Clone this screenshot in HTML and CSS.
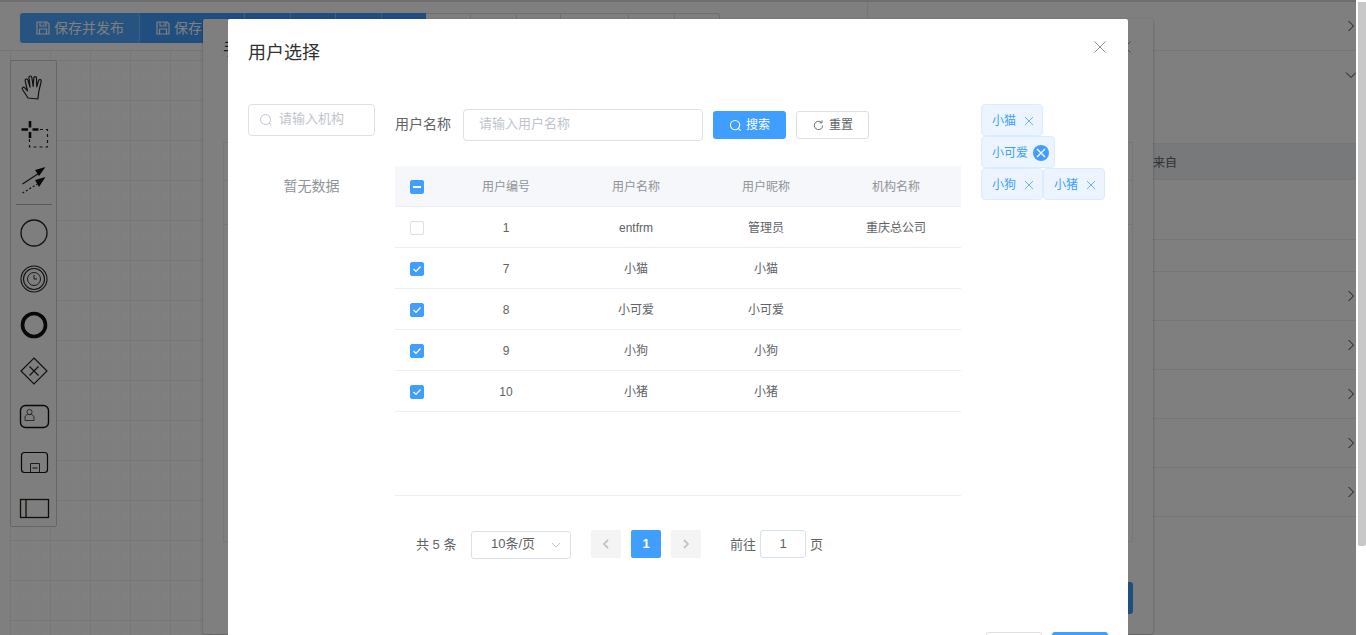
FILE: index.html
```html
<!DOCTYPE html>
<html lang="zh">
<head>
<meta charset="utf-8">
<title>用户选择</title>
<link rel="stylesheet" href="styles.css">
</head>
<body>
<div class="page">
  <div class="topstrip"></div>
  <div class="layout">
    <div class="left">
      <div class="toolbar">
        <div class="tb-group">
          <span class="tb-btn tb-wide">
            <svg class="tb-icon" viewBox="0 0 14 14"><path d="M1 1h10l2 2v10H1zM4 1v4h6V1M3.500 13V8h7v5M8 2.300v1.500" fill="none" stroke="currentColor" stroke-width="1.200"/></svg>保存并发布</span>
          <span class="tb-btn tb-save">
            <svg class="tb-icon" viewBox="0 0 14 14"><path d="M1 1h10l2 2v10H1zM4 1v4h6V1M3.500 13V8h7v5M8 2.300v1.500" fill="none" stroke="currentColor" stroke-width="1.200"/></svg>保存</span>
          <span class="tb-btn tb-s1"></span><span class="tb-btn tb-s2"></span><span class="tb-btn tb-s3"></span><span class="tb-btn tb-s4"></span>
        </div>
        <div class="tb-outline">
          <span class="tb-o o1"></span><span class="tb-o o2"></span><span class="tb-o o3"></span><span class="tb-o o4"></span><span class="tb-o o5"></span><span class="tb-o o6"></span>
        </div>
      </div>
      <div class="canvas">
        <div class="palette">
          <svg class="pal-icon" viewBox="0 0 46 46"><path d="M17 34l-5.500-8.500c-1-1.800 1-3 2.300-1.700l2.700 3-2.300-10c-.4-2 2-2.500 2.700-.7l2.100 7-1-9.500c-.2-2 2.500-2.200 2.800-.3l1.400 9 .6-8.300c.2-1.900 2.600-1.800 2.700.1l.2 8.700 2-6.300c.6-1.700 2.900-1 2.500.8l-2.300 9.700-1 8z" fill="none" stroke="#222" stroke-width="1.200" stroke-linejoin="round"/></svg>
          <svg class="pal-icon" viewBox="0 0 46 46"><path d="M10.500 19.500h6.500M21.500 19.500h6M19 11v6.500M19 22v6" stroke="#111" stroke-width="2.600" fill="none"/><path d="M29 19.500h7.500V37h-18v-8" stroke="#222" stroke-width="1.200" stroke-dasharray="3 3" fill="none"/></svg>
          <svg class="pal-icon" viewBox="0 0 46 46"><path d="M11.500 28l16-10.500" stroke="#222" stroke-width="1.200"/><path d="M34.500 11l-10.500 3 4 6z" fill="#111"/><path d="M11.500 37l15-9" stroke="#222" stroke-width="1.200" stroke-dasharray="2 2"/><path d="M34.500 21l-10.500 3 4 7z" fill="#111"/></svg>
          <div class="pal-sep"></div>
          <svg class="pal-icon" viewBox="0 0 46 46"><circle cx="23" cy="23" r="13" fill="none" stroke="#222" stroke-width="1.300"/></svg>
          <svg class="pal-icon" viewBox="0 0 46 46"><circle cx="23" cy="23" r="13" fill="none" stroke="#222" stroke-width="1.100"/><circle cx="23" cy="23" r="10.500" fill="none" stroke="#222" stroke-width="1.100"/><circle cx="23" cy="23" r="6.500" fill="none" stroke="#333" stroke-width="1"/><path d="M23 19v4h3" fill="none" stroke="#333"/></svg>
          <svg class="pal-icon" viewBox="0 0 46 46"><circle cx="23" cy="23" r="11.500" fill="none" stroke="#111" stroke-width="3.600"/></svg>
          <svg class="pal-icon" viewBox="0 0 46 46"><path d="M23 10l13 13-13 13-13-13z" fill="none" stroke="#222" stroke-width="1.200"/><path d="M18.500 18.500l9 9M27.500 18.500l-9 9" stroke="#222" stroke-width="1.200"/></svg>
          <svg class="pal-icon" viewBox="0 0 46 46"><rect x="9.500" y="11.500" width="28" height="22" rx="5" fill="none" stroke="#111" stroke-width="1.400"/><circle cx="18.500" cy="18" r="2.600" fill="none" stroke="#445" stroke-width=".9"/><path d="M14 26.500V23c0-1.500 2-2 2.500-2.500h4c.5.500 2.500 1 2.500 2.500v3.500z" fill="none" stroke="#445" stroke-width=".9"/></svg>
          <svg class="pal-icon" viewBox="0 0 46 46"><rect x="10.500" y="12.500" width="26" height="20" rx="3" fill="none" stroke="#111" stroke-width="1.200"/><path d="M19.500 32.500v-9h9v9" fill="none" stroke="#433" stroke-width="1"/><path d="M21.500 28h5" stroke="#222"/></svg>
          <svg class="pal-icon" viewBox="0 0 46 46"><rect x="9.500" y="13.500" width="28" height="18" fill="none" stroke="#221a10" stroke-width="1.300"/><path d="M15 14v17" stroke="#221a10" stroke-width="1.300"/></svg>
        </div>
      </div>
    </div>
    <div class="panel">
      <div class="fold"><svg class="chev" viewBox="0 0 10 12"><path d="M2.500 1l5 5-5 5" fill="none" stroke="#303133" stroke-width="1"/></svg></div>
      <div class="fold fold-open"><svg class="chev" viewBox="0 0 12 10"><path d="M1 2.500l5 5 5-5" fill="none" stroke="#303133" stroke-width="1"/></svg></div>
      <div class="form-area">
        <div class="ptable-head"><span>来自</span></div>
        <div class="ptable-row"></div>
        <div class="ptable-row2"></div>
      </div>
      <div class="fold"><svg class="chev" viewBox="0 0 10 12"><path d="M2.500 1l5 5-5 5" fill="none" stroke="#303133" stroke-width="1"/></svg></div>
      <div class="fold"><svg class="chev" viewBox="0 0 10 12"><path d="M2.500 1l5 5-5 5" fill="none" stroke="#303133" stroke-width="1"/></svg></div>
      <div class="fold"><svg class="chev" viewBox="0 0 10 12"><path d="M2.500 1l5 5-5 5" fill="none" stroke="#303133" stroke-width="1"/></svg></div>
      <div class="fold"><svg class="chev" viewBox="0 0 10 12"><path d="M2.500 1l5 5-5 5" fill="none" stroke="#303133" stroke-width="1"/></svg></div>
      <div class="fold"><svg class="chev" viewBox="0 0 10 12"><path d="M2.500 1l5 5-5 5" fill="none" stroke="#303133" stroke-width="1"/></svg></div>
    </div>
  </div>
</div>

<div class="mid-dialog">
  <div class="mid-title">手</div>
  <svg class="mid-close" viewBox="0 0 12 12"><path d="M.5.500l11 11M11.500.500l-11 11" stroke="#909399" stroke-width="1"/></svg>
  <div class="mid-box">
    <div class="mid-line1"></div>
    <div class="mid-line2"></div>
  </div>
  <div class="mid-foot"><span class="mid-btn"></span></div>
</div>

<div class="overlay"></div>

<div class="modal">
  <div class="modal-head">
    <span class="modal-title">用户选择</span>
    <svg class="modal-close" viewBox="0 0 12 12"><path d="M.5.500l11 11M11.500.500l-11 11" stroke="#909399" stroke-width="1"/></svg>
  </div>
  <div class="modal-body">
    <div class="tree">
      <div class="input tree-input">
        <svg class="i-search" viewBox="0 0 14 14"><circle cx="6.500" cy="6.500" r="5" fill="none" stroke="#c0c4cc" stroke-width="1"/><path d="M10 10l2.500 2.500" stroke="#c0c4cc"/></svg>
        <span class="ph">请输入机构</span>
      </div>
      <div class="empty">暂无数据</div>
    </div>
    <div class="content">
      <div class="query">
        <span class="q-label">用户名称</span>
        <div class="input q-input"><span class="ph">请输入用户名称</span></div>
        <span class="btn btn-primary">
          <svg class="btn-icon" viewBox="0 0 14 14"><circle cx="6.500" cy="6.500" r="5" fill="none" stroke="#fff" stroke-width="1.100"/><path d="M10 10l2.500 2.500" stroke="#fff" stroke-width="1.100"/></svg>搜索</span>
        <span class="btn btn-plain">
          <svg class="btn-icon" viewBox="0 0 14 14"><path d="M11.500 7a4.500 4.500 0 1 1-1.500-3.400" fill="none" stroke="#606266" stroke-width="1"/><path d="M10.800 1.500v2.600H8.200" fill="none" stroke="#606266" stroke-width="1"/></svg>重置</span>
      </div>
      <div class="table-wrap">
        <table class="table">
          <colgroup><col class="c-sel"><col class="c-col"><col class="c-col"><col class="c-col"><col class="c-col"></colgroup>
          <thead>
            <tr><th><span class="cb cb-on"><span class="cb-dash"></span></span></th><th>用户编号</th><th>用户名称</th><th>用户昵称</th><th>机构名称</th></tr>
          </thead>
          <tbody>
            <tr><td><span class="cb"></span></td><td>1</td><td>entfrm</td><td>管理员</td><td>重庆总公司</td></tr>
            <tr><td><span class="cb cb-on"><svg viewBox="0 0 14 14"><path d="M3.500 7l2.500 2.500 4.500-5" fill="none" stroke="#fff" stroke-width="1.200"/></svg></span></td><td>7</td><td>小猫</td><td>小猫</td><td></td></tr>
            <tr><td><span class="cb cb-on"><svg viewBox="0 0 14 14"><path d="M3.500 7l2.500 2.500 4.500-5" fill="none" stroke="#fff" stroke-width="1.200"/></svg></span></td><td>8</td><td>小可爱</td><td>小可爱</td><td></td></tr>
            <tr><td><span class="cb cb-on"><svg viewBox="0 0 14 14"><path d="M3.500 7l2.500 2.500 4.500-5" fill="none" stroke="#fff" stroke-width="1.200"/></svg></span></td><td>9</td><td>小狗</td><td>小狗</td><td></td></tr>
            <tr><td><span class="cb cb-on"><svg viewBox="0 0 14 14"><path d="M3.500 7l2.500 2.500 4.500-5" fill="none" stroke="#fff" stroke-width="1.200"/></svg></span></td><td>10</td><td>小猪</td><td>小猪</td><td></td></tr>
          </tbody>
        </table>
      </div>
      <div class="pager">
        <span class="p-total">共 5 条</span>
        <div class="p-select"><span class="p-select-text">10条/页</span><svg class="p-caret" viewBox="0 0 10 6"><path d="M1 1l4 4 4-4" fill="none" stroke="#c0c4cc"/></svg></div>
        <span class="p-btn p-prev"><svg viewBox="0 0 8 12"><path d="M6 2L2 6l4 4" fill="none" stroke="#c0c4cc" stroke-width="1.800"/></svg></span>
        <span class="p-btn p-cur">1</span>
        <span class="p-btn"><svg viewBox="0 0 8 12"><path d="M2 2l4 4-4 4" fill="none" stroke="#c0c4cc" stroke-width="1.800"/></svg></span>
        <span class="p-goto">前往</span>
        <span class="p-input">1</span>
        <span class="p-page">页</span>
      </div>
    </div>
    <div class="tags">
      <span class="tag">小猫<svg class="tag-x" viewBox="0 0 16 16"><path d="M4 4l8 8M12 4l-8 8" stroke="#66b1ff" stroke-width="1"/></svg></span>
      <span class="tag">小可爱<svg class="tag-x tag-x-on" viewBox="0 0 16 16"><path d="M4 4l8 8M12 4l-8 8" stroke="#fff" stroke-width="1.300"/></svg></span>
      <span class="tag">小狗<svg class="tag-x" viewBox="0 0 16 16"><path d="M4 4l8 8M12 4l-8 8" stroke="#66b1ff" stroke-width="1"/></svg></span>
      <span class="tag">小猪<svg class="tag-x" viewBox="0 0 16 16"><path d="M4 4l8 8M12 4l-8 8" stroke="#66b1ff" stroke-width="1"/></svg></span>
    </div>
  </div>
  <div class="modal-foot">
    <span class="foot-btn foot-cancel"></span>
    <span class="foot-btn foot-ok"></span>
  </div>
</div>

<div class="scrollbar"><div class="thumb"></div></div>
</body>
</html>
```

FILE: styles.css
```css
* { box-sizing: border-box; }
html, body { margin: 0; height: 635px; overflow: hidden; }
body {
  position: relative;
  width: 1366px;
  background: #fff;
  font-family: "Liberation Sans", "Noto Sans CJK SC", sans-serif;
  font-size: 14px;
  color: #606266;
}
.page { display: flex; flex-direction: column; height: 635px; }
.topstrip { height: 2px; background: #dcdcdc; flex: none; }
.layout { flex: 1; display: flex; min-height: 0; }
.left { flex: none; width: 867px; display: flex; flex-direction: column; }
.toolbar {
  flex: none;
  height: 49px;
  padding: 11px 0 0 20px;
  display: flex;
  align-items: flex-start;
  border-bottom: 1px solid #e8e8e8;
}
.tb-group { display: flex; height: 30px; border-radius: 3px 0 0 3px; overflow: hidden; background: #4da6ff; }
.tb-btn {
  display: flex;
  align-items: center;
  height: 30px;
  color: #fff;
  font-size: 14px;
  line-height: 30px;
  border-right: 1px solid #7fbfff;
}
.tb-btn:last-child { border-right: 0; }
.tb-wide { width: 120px; padding-left: 16px; }
.tb-save { width: 105px; padding-left: 16px; background: #409eff; }
.tb-s1 { width: 46px; background: #409eff; }
.tb-s2 { width: 45px; background: #409eff; }
.tb-s3 { width: 46px; background: #409eff; }
.tb-s4 { width: 44px; background: #409eff; }
.tb-icon { width: 14px; height: 14px; margin-right: 4px; flex: none; }
.tb-outline { display: flex; height: 30px; border: 1px solid #dcdfe6; border-left: 0; border-radius: 0 3px 3px 0; }
.tb-o { height: 28px; border-right: 1px solid #dcdfe6; }
.tb-o:last-child { border-right: 0; }
.o1 { width: 45px; }
.o2 { width: 46px; }
.o3 { width: 44px; }
.o4 { width: 68px; }
.o5 { width: 46px; }
.o6 { width: 44px; }

.canvas {
  position: relative;
  flex: 1;
  margin-left: 10px;
  background-color: #fff;
  background-image:
    linear-gradient(to right, #eeeeee 1px, transparent 1px),
    linear-gradient(to bottom, #eeeeee 1px, transparent 1px),
    linear-gradient(to right, #fafafa 1px, transparent 1px),
    linear-gradient(to bottom, #fafafa 1px, transparent 1px);
  background-size: 40px 40px, 40px 40px, 10px 10px, 10px 10px;
  background-position: 0 9px, 0 9px, 0 9px, 0 9px;
}
.palette {
  position: absolute;
  left: 0;
  top: 9px;
  width: 47px;
  height: 467px;
  padding-top: 3px;
  background: #fdfdfd;
  border: 1px solid #ccc;
  border-radius: 2px;
  display: flex;
  flex-direction: column;
  align-items: center;
}
.pal-icon { width: 46px; height: 46px; flex: none; }
.pal-sep { flex: none; width: 36px; height: 1px; margin: 2px 0 5px; background: #b4b4b4; }

.panel { flex: 1; border-left: 1px solid #e6ebf5; padding-right: 10px; }
.fold {
  height: 49px;
  display: flex;
  align-items: center;
  justify-content: flex-end;
  border-bottom: 1px solid #e6ebf5;
}
.fold-open { border-bottom: 0; height: 48px; }
.chev { width: 12px; height: 12px; margin-right: -1px; }
.form-area { height: 173px; padding-top: 44px; border-bottom: 1px solid #e6ebf5; }
.ptable-head {
  height: 37px;
  padding-left: 285px;
  background: #f0f2f5;
  border-top: 1px solid #e6ebf5;
  border-bottom: 1px solid #e6ebf5;
  font-size: 12px;
  line-height: 38px;
  color: #606266;
}
.ptable-row { height: 60px; border-bottom: 1px solid #e6ebf5; }
.ptable-row2 { height: 31px; }

.mid-dialog {
  position: absolute;
  left: 203px;
  top: 19px;
  width: 950px;
  height: 615px;
  padding: 20px;
  background: #fff;
  border-radius: 2px;
  box-shadow: 0 1px 3px rgba(0, 0, 0, .3);
  display: flex;
  flex-direction: column;
}
.mid-title { height: 24px; font-size: 18px; line-height: 18px; color: #303133; padding-top: 1px; margin-top: 1px; flex: none; }
.mid-close { position: absolute; right: 22px; top: 22px; width: 12px; height: 12px; }
.mid-box { flex: none; height: 400px; margin-top: 78px; border: 1px solid #ebeef5; }
.mid-line1 { height: 38px; border-bottom: 1px solid #ebeef5; }
.mid-line2 { height: 44px; border-bottom: 1px solid #ebeef5; }
.mid-foot { display: flex; justify-content: flex-end; margin-top: 40px; }
.mid-btn { width: 70px; height: 32px; border-radius: 3px; background: #409eff; }

.overlay { position: absolute; inset: 0; background: rgba(0, 0, 0, .5); }

.modal {
  position: absolute;
  left: 228px;
  top: 19px;
  width: 900px;
  height: 616px;
  overflow: hidden;
  background: #fff;
  border-radius: 2px 2px 0 0;
}
.modal-head { position: relative; height: 55px; padding: 22px 20px 0; }
.modal-title { display: block; font-size: 18px; line-height: 24px; color: #303133; }
.modal-close { position: absolute; right: 22px; top: 22px; width: 12px; height: 12px; }
.modal-body { display: flex; gap: 20px; padding: 30px 20px 0; }

.input { display: flex; align-items: center; background: #fff; border: 1px solid #dcdfe6; border-radius: 4px; }
.ph { color: #c0c4cc; font-size: 13px; line-height: 20px; padding-bottom: 2px; }
.tree { width: 127px; flex: none; }
.tree-input { height: 32px; padding-left: 10px; }
.i-search { width: 14px; height: 14px; margin-right: 6px; }
.empty { margin-top: 40px; text-align: center; font-size: 14px; line-height: 20px; color: #909399; }

.content { width: 566px; flex: none; }
.query { display: flex; align-items: center; height: 32px; margin-top: 5px; }
.q-label { width: 68px; flex: none; font-size: 14px; line-height: 20px; padding-bottom: 2px; color: #606266; }
.q-input { width: 240px; height: 32px; padding-left: 15px; flex: none; }
.btn {
  display: flex;
  align-items: center;
  justify-content: center;
  width: 73px;
  height: 28px;
  margin-left: 10px;
  border-radius: 3px;
  font-size: 12px;
  line-height: 16px;
  flex: none;
}
.btn-primary { background: #409eff; color: #fff; }
.btn-plain { background: #fff; border: 1px solid #dcdfe6; color: #606266; }
.btn-icon { width: 13px; height: 13px; margin-right: 4px; }

.table-wrap { height: 330px; margin-top: 25px; border-bottom: 1px solid #ebeef5; }
.table { width: 566px; border-collapse: separate; border-spacing: 0; table-layout: fixed; font-size: 12px; }
.c-sel { width: 46px; }
.c-col { width: 130px; }
.table th, .table td {
  height: 41px;
  padding: 2px 0 0;
  text-align: center;
  font-weight: 400;
  line-height: 16px;
  border-bottom: 1px solid #ebeef5;
}
.table th { background: #f5f7fa; color: #909399; }
.table td { color: #606266; }
.cb {
  display: block;
  width: 14px;
  height: 14px;
  margin-left: 15px;
  border: 1px solid #dcdfe6;
  border-radius: 2px;
  background: #fff;
}
.cb svg { display: block; width: 14px; height: 14px; margin: -1px; }
.cb-on { background: #409eff; border-color: #409eff; }
.cb-dash { display: block; width: 8px; height: 2px; margin: 5px 2px 0; background: #fff; }

.pager { display: flex; align-items: center; height: 28px; margin-top: 34px; font-size: 13px; line-height: 18px; color: #606266; }
.p-total { width: 76px; padding: 2px 0 0 21px; flex: none; white-space: nowrap; }
.p-select {
  display: flex;
  align-items: center;
  justify-content: space-between;
  width: 100px;
  height: 28px;
  margin-top: 2px;
  padding: 0 9px 0 19px;
  border: 1px solid #dcdfe6;
  border-radius: 3px;
  flex: none;
}
.p-select-text { padding-bottom: 2px; }
.p-caret { width: 10px; height: 6px; }
.p-btn {
  display: flex;
  align-items: center;
  justify-content: center;
  width: 30px;
  height: 28px;
  margin-left: 10px;
  border-radius: 2px;
  background: #f4f4f5;
  font-weight: 700;
  flex: none;
}
.p-btn svg { width: 8px; height: 12px; }
.p-prev { margin-left: 20px; }
.p-cur { background: #409eff; color: #fff; }
.p-goto { margin-left: 29px; width: 30px; padding-top: 2px; flex: none; }
.p-input {
  display: flex;
  align-items: center;
  justify-content: center;
  width: 46px;
  height: 28px;
  border: 1px solid #dcdfe6;
  border-radius: 3px;
  flex: none;
}
.p-page { margin-left: 4px; padding-top: 2px; }

.tags { flex: 1; min-width: 0; display: flex; flex-wrap: wrap; align-items: flex-start; align-content: flex-start; }
.tag {
  display: inline-flex;
  align-items: center;
  height: 32px;
  padding: 2px 5px 0 10px;
  background: #ecf5ff;
  border: 1px solid #d9ecff;
  border-radius: 4px;
  color: #409eff;
  font-size: 12px;
  line-height: 28px;
}
.tag-x { width: 16px; height: 16px; margin-left: 5px; border-radius: 50%; }
.tag-x-on { background: #409eff; }

.modal-foot { position: absolute; left: 758px; top: 613px; display: flex; gap: 10px; }
.foot-btn { display: block; width: 56px; height: 32px; border-radius: 3px; }
.foot-cancel { background: #fff; border: 1px solid #dcdfe6; }
.foot-ok { background: #409eff; }

.scrollbar { position: absolute; right: 0; top: 0; bottom: 0; width: 10px; background: #fff; padding: 2px 0 0 2px; }
.thumb { height: 544px; background: #c8c8c8; border-radius: 0 0 2px 2px; }
```
